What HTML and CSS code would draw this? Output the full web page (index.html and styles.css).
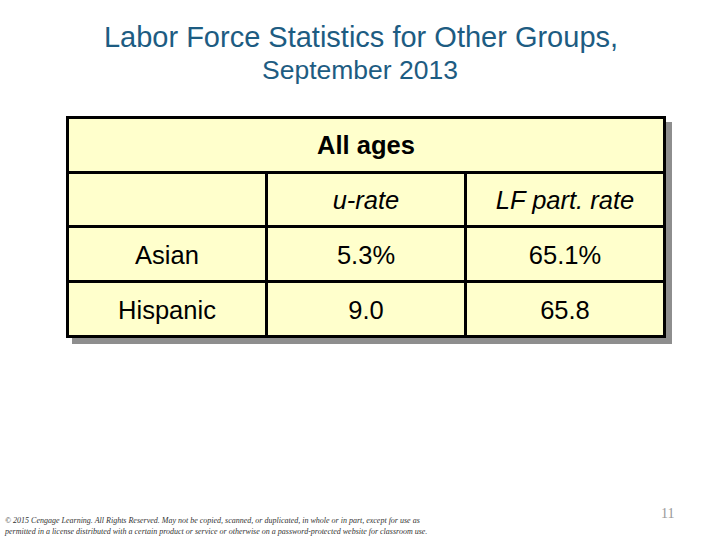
FILE: index.html
```html
<!DOCTYPE html>
<html>
<head>
<meta charset="utf-8">
<link rel="stylesheet" href="styles.css">
</head>
<body>
<div class="slide">
  <header class="title">
    <h1>Labor Force Statistics for Other Groups,</h1>
    <h2>September 2013</h2>
  </header>
  <div class="table-wrap">
    <div class="grid">
      <div class="cell head">All ages</div>
      <div class="cell"></div>
      <div class="cell it">u-rate</div>
      <div class="cell it">LF part. rate</div>
      <div class="cell">Asian</div>
      <div class="cell">5.3%</div>
      <div class="cell">65.1%</div>
      <div class="cell">Hispanic</div>
      <div class="cell">9.0</div>
      <div class="cell">65.8</div>
    </div>
  </div>
  <footer class="foot">
    <p class="copy">© 2015 Cengage Learning. All Rights Reserved. May not be copied, scanned, or duplicated, in whole or in part, except for use as<br>permitted in a license distributed with a certain product or service or otherwise on a password-protected website for classroom use.</p>
    <span class="page">11</span>
  </footer>
</div>
</body>
</html>
```
FILE: styles.css
```css
html, body {
  margin: 0;
  padding: 0;
  background: #fff;
}
.slide {
  width: 720px;
  height: 540px;
  position: relative;
  font-family: "Liberation Sans", Arial, sans-serif;
  display: flex;
  flex-direction: column;
}
.title {
  text-align: center;
  color: #1d5c82;
  padding-top: 21px;
}
.title h1 {
  margin: 0;
  font-weight: normal;
  font-size: 29px;
  line-height: 33px;
  padding-left: 2px;
}
.title h2 {
  margin: 0;
  font-weight: normal;
  font-size: 26.5px;
  line-height: 32px;
}
.table-wrap {
  margin-top: 30px;
  margin-left: 66px;
  width: 600px;
}
.grid {
  display: grid;
  grid-template-columns: 196px 196px 196px;
  grid-template-rows: 52px 51px 52px 52px;
  gap: 3px;
  padding: 3px;
  background: #000;
  box-shadow: 6px 6px 0 #8e8e8e;
}
.cell {
  background: #ffffcc;
  display: flex;
  align-items: center;
  justify-content: center;
  font-size: 25.5px;
  color: #000;
  padding-top: 2px;
}
.cell.head {
  grid-column: 1 / 4;
  font-weight: bold;
  padding-top: 0;
}
.cell.it {
  font-style: italic;
}
.foot {
  margin-top: auto;
  position: relative;
  height: 40px;
}
.copy {
  margin: 0;
  position: absolute;
  left: 5px;
  top: 15px;
  font-family: "Liberation Serif", "Times New Roman", serif;
  font-style: italic;
  font-size: 8px;
  line-height: 11px;
  color: #333;
}
.page {
  position: absolute;
  left: 661px;
  top: 6px;
  font-family: "Liberation Serif", "Times New Roman", serif;
  font-size: 14px;
  color: #999;
}
```
